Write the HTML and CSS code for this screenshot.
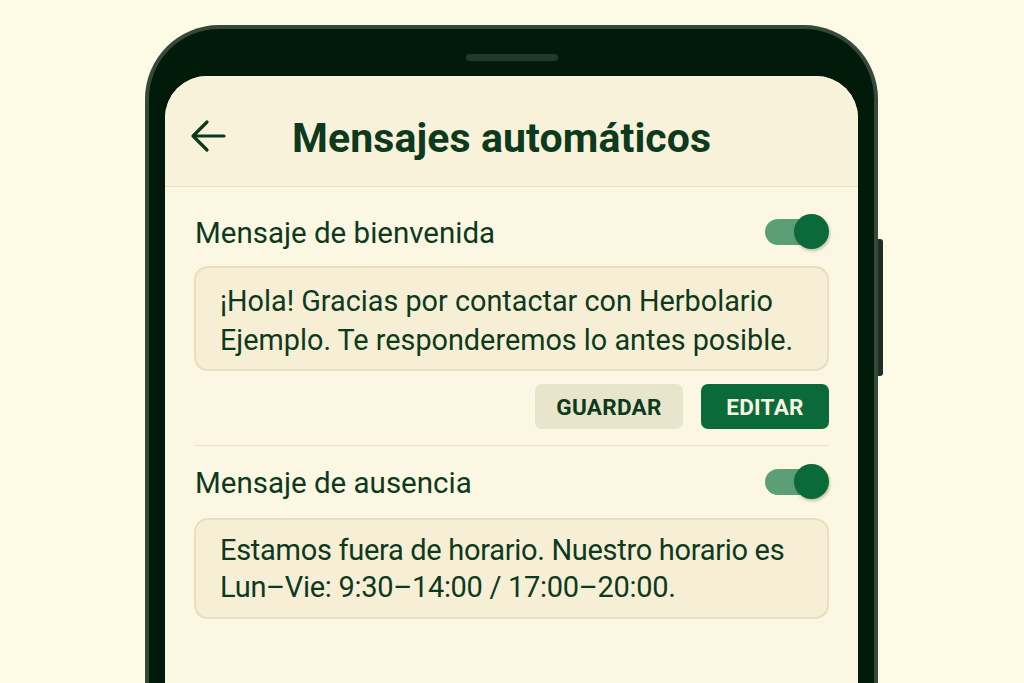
FILE: index.html
```html
<!DOCTYPE html>
<html lang="es">
<head>
  <meta charset="UTF-8">
  <meta name="viewport" content="width=device-width, initial-scale=1">
  <title>Mensajes automáticos</title>
  <link rel="stylesheet" href="styles.css">
</head>
<body>

  <div class="phone">
    <div class="side-button"></div>
    <div class="speaker"></div>

    <div class="screen">
      <div class="app-bar">
        <svg class="back" width="36" height="34" viewBox="0 0 36 34" fill="none" stroke="#0d3a1d" stroke-width="3.2" stroke-linecap="round" stroke-linejoin="round">
          <path d="M34 17H3M17 3L3 17l14 14"/>
        </svg>
        <h1>Mensajes automáticos</h1>
      </div>

      <div class="content">
        <div class="section">
          <div class="row">
            <span class="label">Mensaje de bienvenida</span>
            <div class="toggle on"><span class="knob"></span></div>
          </div>
          <div class="msg-box">¡Hola! Gracias por contactar con Herbolario Ejemplo. Te responderemos lo antes posible.</div>
          <div class="actions">
            <button class="btn btn-light">GUARDAR</button>
            <button class="btn btn-dark">EDITAR</button>
          </div>
        </div>

        <div class="section">
          <div class="row">
            <span class="label">Mensaje de ausencia</span>
            <div class="toggle on"><span class="knob"></span></div>
          </div>
          <div class="msg-box narrow">Estamos fuera de horario. Nuestro horario es Lun–Vie: 9:30–14:00 / 17:00–20:00.</div>
        </div>
      </div>
    </div>
  </div>

</body>
</html>
```

FILE: styles.css
```css
body {
  margin: 0;
  background-color: #fdfbe6;
  font-family: Roboto, "Noto Sans", sans-serif;
  color: #0d3a1d;
  height: 683px;
  overflow: hidden;
}
.phone {
  position: relative;
  width: 733px;
  height: 700px;
  margin: 25px 0 0 145px;
  background-color: #021a0a;
  border: 4px solid #34493a;
  border-bottom: none;
  border-radius: 74px 74px 0 0;
  padding: 0 16px;
  box-sizing: border-box;
}
.side-button {
  position: absolute;
  right: -9px;
  top: 210px;
  width: 5px;
  height: 137px;
  background-color: #1d2e24;
  border-radius: 0 3px 3px 0;
}
.speaker {
  width: 92px;
  height: 7px;
  margin: 25px auto 15px;
  background-color: #1e3a2a;
  border-radius: 4px;
}
.screen {
  background-color: #fcf7e2;
  border-radius: 42px 42px 0 0;
  height: 620px;
  overflow: hidden;
}
.app-bar {
  display: flex;
  align-items: center;
  height: 110px;
  padding-left: 25px;
  background-color: #f9f2da;
  border-bottom: 1.5px solid #e9e1c6;
}
.back {
  margin-top: 10px;
}
.app-bar h1 {
  margin: 14px 0 0 66px;
  font-size: 41px;
  font-weight: 700;
  letter-spacing: 0.1px;
}
.content {
  padding: 0 29px 0 29px;
}
.section {
  padding-top: 27px;
}
.section + .section {
  border-top: 1.5px solid #e9e2c8;
  margin-top: 16px;
  padding-top: 18px;
}
.row {
  display: flex;
  justify-content: space-between;
  align-items: center;
  height: 35px;
  margin-left: 1px;
}
.label {
  font-size: 29.5px;
  margin-top: 2px;
}
.toggle {
  position: relative;
  width: 64px;
  height: 35px;
}
.toggle::before {
  content: "";
  position: absolute;
  left: 0;
  top: 5px;
  width: 50px;
  height: 26px;
  border-radius: 13px;
  background-color: #5c9f76;
}
.knob {
  position: absolute;
  right: 0;
  top: 0;
  width: 35px;
  height: 35px;
  border-radius: 50%;
  background-color: #0b6a39;
  box-shadow: 1px 2px 3px rgba(0, 40, 10, 0.25);
}
.msg-box {
  margin-top: 17px;
  padding: 14px 24px 9px 24px;
  background-color: #f6efd6;
  border: 2px solid #e7dfbf;
  border-radius: 14px;
  font-size: 28.8px;
  line-height: 39px;
}
.msg-box.narrow {
  margin-top: 19px;
  padding: 12px 24px 11px 24px;
  font-size: 29px;
  line-height: 37px;
  letter-spacing: -0.3px;
}
.actions {
  display: flex;
  justify-content: flex-end;
  gap: 18px;
  margin-top: 13px;
}
.btn {
  font-family: Roboto, sans-serif;
  font-size: 22.5px;
  font-weight: 700;
  height: 45px;
  border: none;
  border-radius: 7px;
  letter-spacing: 0.3px;
}
.btn-light {
  width: 148px;
  background-color: #e8e5cd;
  color: #0d3a1d;
}
.btn-dark {
  width: 128px;
  background-color: #0b6a39;
  color: #f6f3e2;
}
```
